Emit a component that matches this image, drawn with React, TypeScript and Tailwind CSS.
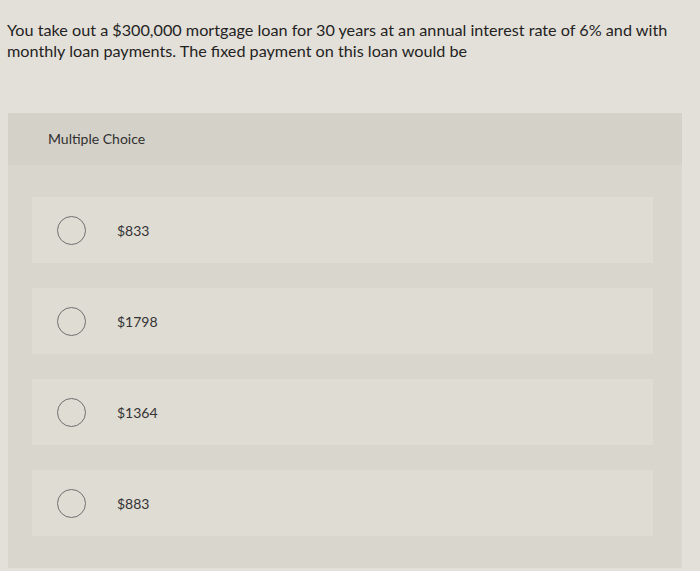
const options = ["$833", "$1798", "$1364", "$883"];

function Radio() {
  return <span className="block h-[29px] w-[29px] shrink-0 rounded-full border-[1.5px] border-[#6f6f6f]" />;
}

export default function App() {
  return (
    <div
      className="h-[571px] w-[700px] overflow-hidden bg-[#e3e0d9] text-[#2c2c2c]"
      style={{ fontFamily: "Lato, 'Open Sans', sans-serif" }}
    >
      <p className="px-[7px] pt-[19px] text-[16.2px] leading-[21px] text-[#232323]">
        You take out a $300,000 mortgage loan for 30 years at an annual interest rate of 6% and with monthly loan
        payments. The fixed payment on this loan would be
      </p>

      <div className="ml-[8px] mt-[52px] w-[674px] bg-[#d9d6ce]">
        <div className="flex h-[52px] items-center bg-[#d4d1c9] pb-[2px] pl-[40px] text-[14px] text-[#303030]">
          Multiple Choice
        </div>
        <div className="flex flex-col gap-[25px] pb-[32px] pl-[24px] pt-[32px]">
          {options.map((o) => (
            <div key={o} className="flex h-[66px] w-[621px] items-center bg-[#dfdcd4] pl-[25px]">
              <Radio />
              <span className="ml-[31px] text-[14px] text-[#333]">{o}</span>
            </div>
          ))}
        </div>
      </div>
    </div>
  );
}
